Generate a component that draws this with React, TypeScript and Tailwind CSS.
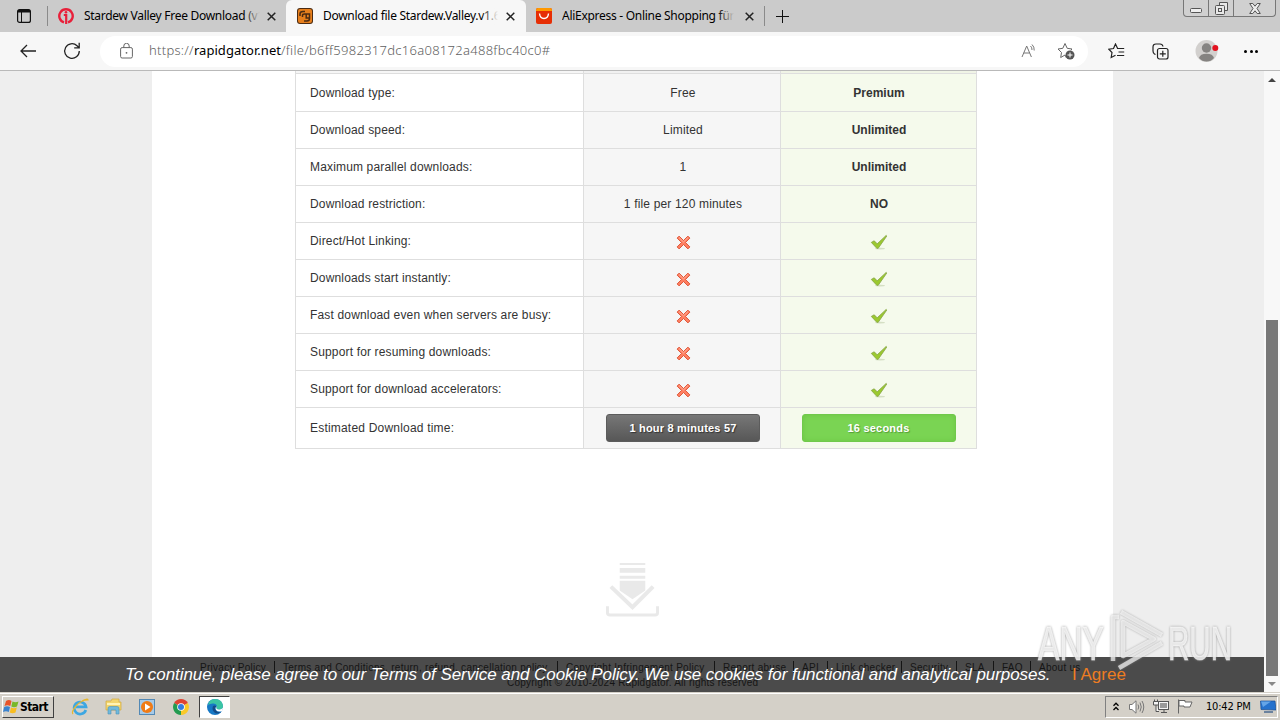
import { ReactNode } from "react";

const rows = [
  { label: "Download type:", free: "Free", premium: "Premium" },
  { label: "Download speed:", free: "Limited", premium: "Unlimited" },
  { label: "Maximum parallel downloads:", free: "1", premium: "Unlimited" },
  { label: "Download restriction:", free: "1 file per 120 minutes", premium: "NO" },
  { label: "Direct/Hot Linking:" },
  { label: "Downloads start instantly:" },
  { label: "Fast download even when servers are busy:" },
  { label: "Support for resuming downloads:" },
  { label: "Support for download accelerators:" },
];

const footerLinks = [
  { text: "Privacy Policy", width: "w-[83px]" },
  { text: "Terms and Conditions, return, refund, cancellation policy", width: "w-[283px]" },
  { text: "Copyright Infringement Policy", width: "w-[157px]" },
  { text: "Report abuse", width: "w-[79px]" },
  { text: "API", width: "w-[34px]" },
  { text: "Link checker", width: "w-[74px]" },
  { text: "Security", width: "w-[55px]" },
  { text: "SLA", width: "w-[37px]" },
  { text: "FAQ", width: "w-[37px]" },
  { text: "About us", width: "w-[45px]" },
];

function CloseIcon() {
  return (
    <svg width="9" height="9" viewBox="0 0 9 9" className="shrink-0" stroke="#222" strokeWidth="1.5">
      <path d="M0.7 0.7L8.3 8.3M8.3 0.7L0.7 8.3" />
    </svg>
  );
}

function CrossIcon() {
  return (
    <svg width="15" height="15" viewBox="0 0 16 16" className="mt-[3px]">
      <path d="M3.3 1.2L8 5.9L12.7 1.2L14.8 3.3L10.1 8L14.8 12.7L12.7 14.8L8 10.1L3.3 14.8L1.2 12.7L5.9 8L1.2 3.3Z" fill="#ff8062" stroke="#dc5032" strokeWidth="1" strokeLinejoin="round" />
      <path d="M3.3 2.8L8 7.4L12.7 2.8" fill="none" stroke="#ffb39f" strokeWidth="1" />
    </svg>
  );
}

function CheckIcon() {
  return (
    <svg width="18" height="17" viewBox="0 0 18 17" className="mt-[3px]">
      <ellipse cx="10" cy="14.6" rx="5" ry="0.9" fill="#d5dfc4" />
      <path d="M1.3 8.4L4.2 6.8L7.2 9.8L16.2 1.4L16.8 2L8.2 14.3L6.8 14.3Z" fill="#9bc92f" stroke="#84a344" strokeWidth="0.8" strokeLinejoin="round" />
    </svg>
  );
}

function TabTitle({ children, fade }: { children: ReactNode; fade: string }) {
  return (
    <div className="relative h-5 overflow-hidden whitespace-nowrap font-['Noto_Sans',sans-serif] text-[12px] leading-5 text-black">
      {children}
      <div className={`absolute right-0 top-0 h-5 w-4 bg-linear-to-r from-transparent ${fade}`} />
    </div>
  );
}

function TabBar() {
  return (
    <div className="flex h-8 items-stretch bg-[#cbcbcb]">
      <div className="flex w-[47px] items-center pl-[17px]">
        <svg width="14" height="14" viewBox="0 0 14 14" fill="none" stroke="#111">
          <rect x="0.6" y="0.6" width="12.8" height="12.8" rx="2" strokeWidth="1.2" />
          <path d="M1 2.2H13" strokeWidth="2.6" />
          <path d="M4.5 3V13" />
        </svg>
      </div>
      <div className="my-1.5 w-px bg-[#8a8a8a]" />
      <div className="flex w-[238px] items-center pl-[10px]">
        <svg width="16" height="16" viewBox="0 0 16 16" className="mr-[10px] shrink-0" fill="none" stroke="#e8203a">
          <path d="M6 14.4A6.7 6.7 0 1 1 10 14.4" strokeWidth="2.4" />
          <path d="M5.8 7H8.2V16" strokeWidth="2.2" />
          <circle cx="8" cy="4.2" r="1.3" fill="#e8203a" stroke="none" />
        </svg>
        <div className="w-[176px] tracking-[-0.28px]">
          <TabTitle fade="to-[#cbcbcb]">Stardew Valley Free Download (v1.</TabTitle>
        </div>
        <div className="ml-[7px]"><CloseIcon /></div>
      </div>
      <div className="flex w-[240px] items-center rounded-t-md bg-[#f7f7f7] pl-[11px]">
        <svg width="16" height="16" viewBox="0 0 16 16" className="mr-[10px] shrink-0">
          <rect width="16" height="16" rx="3" fill="#4b2b12" />
          <rect x="1" y="1" width="14" height="14" rx="2" fill="#e77f1c" />
          <path d="M3 8V6Q3 3.5 6 3.5H8M5.5 9V7.5Q5.5 6 7.5 6H12.5V10.5Q12.5 13 10 13H7M12.5 6H9.2V10H12" fill="none" stroke="#4b2b12" strokeWidth="1.5" />
        </svg>
        <div className="w-[175px] tracking-[-0.28px]">
          <TabTitle fade="to-[#f7f7f7]">Download file Stardew.Valley.v1.6.</TabTitle>
        </div>
        <div className="ml-[8px]"><CloseIcon /></div>
      </div>
      <div className="flex w-[238px] items-center pl-[10px]">
        <svg width="16" height="16" viewBox="0 0 16 16" className="mr-[10px] shrink-0">
          <rect width="16" height="16" rx="2" fill="#e62e04" />
          <path d="M0 3V2Q0 0 2 0H14Q16 0 16 2V3Z" fill="#ff9800" />
          <path d="M3.5 5.5Q4 10.5 8 10.5T12.5 5.5" fill="none" stroke="#fff" strokeWidth="1.4" />
        </svg>
        <div className="w-[172px] tracking-[-0.28px]">
          <TabTitle fade="to-[#cbcbcb]">AliExpress - Online Shopping für</TabTitle>
        </div>
        <div className="ml-[11px]"><CloseIcon /></div>
      </div>
      <div className="my-1.5 w-px bg-[#8a8a8a]" />
      <div className="flex items-center pl-[11px]">
        <svg width="13" height="13" viewBox="0 0 13 13" stroke="#111">
          <path d="M6.5 0V13M0 6.5H13" />
        </svg>
      </div>
      <div className="ml-auto mr-1 flex h-[17px] w-[93px] rounded-b border border-t-0 border-[#777] bg-[#d0d0d0]">
        <div className="flex w-[25px] items-center justify-center border-r border-[#777]">
          <svg width="12" height="5" viewBox="0 0 12 5" className="mt-1"><rect x="0.5" y="0.5" width="11" height="4" rx="1" fill="#eee" stroke="#555" /></svg>
        </div>
        <div className="flex w-[25px] items-center justify-center border-r border-[#777]">
          <svg width="13" height="13" viewBox="0 0 13 13" fill="#e8e8e8" stroke="#555">
            <path d="M4.5 3.5V0.5H12.5V8.5H9.5" />
            <rect x="0.5" y="3.5" width="9" height="9" rx="1" />
            <rect x="3.5" y="6.5" width="3" height="3" />
          </svg>
        </div>
        <div className="flex flex-1 items-center justify-center">
          <svg width="12" height="11" viewBox="0 0 12 11" fill="#eee" stroke="#555">
            <path d="M0.7 0.5H3.8L6 3.2L8.2 0.5H11.3L8 5.5L11.3 10.5H8.2L6 7.8L3.8 10.5H0.7L4 5.5Z" />
          </svg>
        </div>
      </div>
    </div>
  );
}

function Toolbar() {
  return (
    <div className="flex h-[39px] items-center border-b border-[#b9b9b9] bg-[#f7f7f7] pl-5">
      <svg width="17" height="14" viewBox="0 0 17 14" fill="none" stroke="#222" strokeWidth="1.3">
        <path d="M16 7H1M7 1L1 7L7 13" />
      </svg>
      <svg width="18" height="18" viewBox="0 0 18 18" className="ml-[26px]" fill="none" stroke="#222" strokeWidth="1.3">
        <path d="M16.3 9A7.3 7.3 0 1 1 14 3.7L16 5.6M16.2 0.8V5.8H11.2" />
      </svg>
      <div className="ml-[19px] flex h-[31px] w-[988px] items-center rounded-full bg-white pl-5">
        <svg width="13" height="16" viewBox="0 0 13 16" fill="none" stroke="#666">
          <rect x="0.6" y="4.6" width="11.8" height="10.4" rx="1.5" />
          <path d="M3.8 4.6V3A2.7 2.7 0 0 1 9.2 3V4.6" />
          <circle cx="6.5" cy="9.8" r="0.9" fill="#666" stroke="none" />
        </svg>
        <div className="ml-4 whitespace-nowrap font-['Noto_Sans',sans-serif] text-[13px] font-light tracking-[0.28px] text-[#606060]">
          https://<span className="font-normal tracking-[0.05px] text-black">rapidgator.net</span>/file/b6ff5982317dc16a08172a488fbc40c0#
        </div>
        <svg width="17" height="16" viewBox="0 0 17 16" className="ml-auto" fill="none" stroke="#777">
          <path d="M1 14L5.7 3L10.4 14M2.7 10H8.7M9.5 3Q11.2 4.5 11 7M11 1.5Q13.5 3.8 13.2 7.5" />
        </svg>
        <svg width="18" height="18" viewBox="0 0 18 18" className="ml-[19px] mr-[13px]" fill="none" stroke="#666">
          <path d="M9.5 16L8 13L3.7 15.5L4.5 10.5L1 7L5.8 6.3L8 1.5L10.2 6.3L15 7L13.8 8.2" />
          <circle cx="13" cy="13" r="4.5" fill="#555" stroke="none" />
          <path d="M13 10.5V15.5M10.5 13H15.5" stroke="#fff" />
        </svg>
      </div>
      <svg width="17" height="16" viewBox="0 0 17 16" className="ml-5" fill="none" stroke="#222" strokeWidth="1.2">
        <path d="M9.5 5.2L7.5 1L5.5 5.5L0.8 6.2L4 9.5L3.2 14.5L7.5 12.2M9 5.5H16.2M10.5 9H16.2M9 12.5H16.2" />
      </svg>
      <svg width="17" height="17" viewBox="0 0 17 17" className="ml-[27px]" fill="none" stroke="#222" strokeWidth="1.2">
        <path d="M3.5 11.5L2.5 11Q1 10 1 8V4Q1 1 4 1H8Q10.5 1 11 3.5" />
        <rect x="5.5" y="5.5" width="10.5" height="10.5" rx="2" />
        <path d="M10.8 7.8V13.8M7.8 10.8H13.8" />
      </svg>
      <svg width="24" height="24" viewBox="0 0 24 24" className="ml-[26px]">
        <circle cx="11.5" cy="12" r="11" fill="#d2d0ce" />
        <circle cx="11.5" cy="9" r="4.7" fill="#858381" />
        <path d="M4 19Q5 14.7 11.5 14.7T19 19Q16 22.5 11.5 22.5T4 19Z" fill="#858381" />
        <circle cx="20.3" cy="9" r="3" fill="#e3121f" />
      </svg>
      <div className="ml-[25px] flex gap-[2.5px]">
        <div className="size-[3px] rounded-full bg-black" />
        <div className="size-[3px] rounded-full bg-black" />
        <div className="size-[3px] rounded-full bg-black" />
      </div>
    </div>
  );
}

function CompareTable() {
  return (
    <div className="ml-[143px] w-[682px] border-x border-[#dedede] text-[12px] text-[#333]">
      <div className="grid h-[3px] grid-cols-[287px_198px_195px] border-b border-[#dedede]">
        <div className="bg-[#f6f6f6]" />
        <div className="border-x border-[#dedede] bg-[#f1f1f1]" />
        <div className="bg-[#f0f4e6]" />
      </div>
      {rows.map((row) => (
        <div key={row.label} className="grid h-[37px] grid-cols-[287px_198px_195px] border-b border-[#dedede] nth-2:h-[38px]">
          <div className="flex items-center pl-[14px] tracking-[0.16px]">{row.label}</div>
          <div className="flex items-center justify-center border-x border-[#dedede] bg-[#f6f6f6] pl-0.5 tracking-[0.16px]">
            {row.free ?? <CrossIcon />}
          </div>
          <div className="flex items-center justify-center bg-[#f5faec] pl-px font-bold">
            {row.premium ?? <CheckIcon />}
          </div>
        </div>
      ))}
      <div className="grid h-[41px] grid-cols-[287px_198px_195px] border-b border-[#dedede]">
        <div className="flex items-center pl-[14px] tracking-[0.2px]">Estimated Download time:</div>
        <div className="flex items-center justify-center border-x border-[#dedede] bg-[#f6f6f6] pl-0.5">
          <div className="h-7 w-[154px] rounded-[3px] border border-[#5c5c5c] bg-linear-to-b from-[#777] to-[#575757] text-center text-[11px] font-bold leading-[26px] tracking-[0.2px] text-white text-shadow-[1px_1px_1px_#333]">
            1 hour 8 minutes 57
          </div>
        </div>
        <div className="flex items-center justify-center bg-[#f5faec]">
          <div className="h-7 w-[154px] rounded-[3px] border border-[#70c94b] bg-[#7ad453] text-center text-[11px] font-bold leading-[26px] tracking-[0.2px] text-white shadow-[inset_0_0_5px_#6cc546] text-shadow-[1px_1px_1px_#559c39]">
            16 seconds
          </div>
        </div>
      </div>
    </div>
  );
}

function Watermark() {
  return (
    <svg width="204" height="68" viewBox="0 0 204 68" className="absolute left-[1034px] top-[535px] drop-shadow-[0_0_1px_#888]">
      <g fill="#fff" fillOpacity="0.75" stroke="#fff" strokeOpacity="0.5" strokeWidth="1" fontFamily="Liberation Sans Narrow, Liberation Sans, sans-serif" fontSize="49">
        <text x="4" y="54" textLength="66" lengthAdjust="spacingAndGlyphs">ANY</text>
        <text x="134" y="54" textLength="64" lengthAdjust="spacingAndGlyphs">RUN</text>
      </g>
      <g fill="none" stroke="#fff" strokeOpacity="0.65" strokeWidth="4.5" strokeLinejoin="round">
        <path d="M89 16V50L120 33Z" />
        <path d="M85 11H79V55" />
        <path d="M87 6L128 29M85 62L128 37" />
      </g>
    </svg>
  );
}

function Page() {
  return (
    <div className="relative flex h-[621px] overflow-hidden bg-[#eee]">
      <div className="ml-[152px] flex w-[961px] flex-col bg-white">
        <CompareTable />
        <svg width="53" height="55" viewBox="0 0 54 56" className="ml-[454px] mt-[113px]" fill="#e9e9e9">
          <path d="M14 1H40V3H14ZM14 6H40V11H14ZM14 14H40V17H14ZM14 19H40V29L27 38L14 29Z" />
          <path d="M5 25L27 46L48 25" fill="none" stroke="#e9e9e9" strokeWidth="4" />
          <path d="M1.5 45V52Q1.5 54 4 54H50Q52.5 54 52.5 52V45" fill="none" stroke="#e9e9e9" strokeWidth="3" />
        </svg>
      </div>
      <div className="ml-auto flex w-4 flex-col items-center bg-[#f8f8f8]">
        <svg width="8" height="4" viewBox="0 0 8 4" className="mt-[7px]"><path d="M0 4L4 0L8 4Z" fill="#444" /></svg>
        <div className="mt-[238px] h-[356px] w-3 bg-[#777]" />
        <svg width="8" height="4" viewBox="0 0 8 4" className="mt-[6px]"><path d="M0 0L4 4L8 0Z" fill="#888" /></svg>
      </div>
      {/* Cookie bar covers the page footer */}
      <div className="absolute bottom-0 left-0 h-[35px] w-[1264px] overflow-hidden bg-[#4b4b4b]">
        <div className="flex h-5 items-center whitespace-nowrap pl-[200px] text-[10px] text-[#151515]">
          {footerLinks.map((link, i) => (
            <div key={link.text} className={`flex h-3 shrink-0 items-center tracking-[0.27px] ${link.width} ${i > 0 ? "before:-ml-[9px] before:mr-2 before:h-3 before:w-px before:bg-[#151515]" : ""}`}>
              {link.text}
            </div>
          ))}
        </div>
        <div className="-mt-px pl-[507px] text-[10px] leading-[14px] tracking-[0.22px] text-[#151515]">Copyright © 2010-2024 Rapidgator. All rights reserved</div>
        <div className="absolute left-[125px] top-[6px] flex whitespace-nowrap text-[17px] leading-6 text-white">
          <span className="w-[947px] italic tracking-[-0.066px]">To continue, please agree to our Terms of Service and Cookie Policy. We use cookies for functional and analytical purposes.</span>
          <span className="text-[#ee7d22]">I Agree</span>
        </div>
      </div>
      <Watermark />
    </div>
  );
}

function Taskbar() {
  return (
    <div className="flex h-7 items-center border-t border-[#d4d0c8] bg-[#d4d0c8] pl-0.5 shadow-[inset_0_1px_0_#fff]">
      <div className="flex h-[22px] w-[52px] items-center border border-b-[#404040] border-l-white border-r-[#404040] border-t-white font-['DejaVu_Sans_Condensed','DejaVu_Sans',sans-serif] text-[12px] font-bold tracking-[-0.6px] text-black">
        <svg width="17" height="16" viewBox="0 0 17 16" className="shrink-0">
          <path d="M3 2Q6 0 8.5 2L7.3 7Q4.5 5.5 1.5 7Z" fill="#e8542a" />
          <path d="M9.5 2.5Q12.5 4 15.5 2.5L14 7.5Q11 9 8.3 7.5Z" fill="#79b829" />
          <path d="M1.2 8Q4 6.5 7 8L5.8 13Q3 11.5 0 13Z" fill="#3a83cf" />
          <path d="M8 8.5Q11 10 13.8 8.5L12.5 13.5Q9.5 15 6.8 13.5Z" fill="#f8bd20" />
        </svg>
        Start
      </div>
      <svg width="18" height="18" viewBox="0 0 18 18" className="ml-[17px]" fill="none">
        <path d="M14.8 12A6 6 0 1 1 15 8.8H5" stroke="#3da7e2" strokeWidth="2.7" />
        <path d="M2 16Q0 14 5 8T17 2Q16.5 0 11 3" stroke="#e7b72f" strokeWidth="1.2" />
      </svg>
      <svg width="17" height="17" viewBox="0 0 17 17" className="ml-4">
        <path d="M1 3H6L7 1H14V4H16V12H1Z" fill="#f2d56f" stroke="#d1a93e" strokeWidth="0.7" />
        <path d="M2 6H15" stroke="#fff3b5" strokeWidth="2" />
        <path d="M3 16V10Q3 8.5 5 8.5H12Q14 8.5 14 10V16H11V12H6V16Z" fill="#70b9dc" stroke="#4c92b8" strokeWidth="0.6" />
      </svg>
      <svg width="16" height="16" viewBox="0 0 16 16" className="ml-[17px]">
        <rect x="0.5" y="0.5" width="15" height="15" fill="#a6cae8" stroke="#5389b5" />
        <circle cx="8" cy="8" r="6" fill="#f07b15" />
        <path d="M6 4.5L11.5 8L6 11.5Z" fill="#fff" />
      </svg>
      <svg width="16" height="16" viewBox="0 0 16 16" className="ml-[18px]">
        <path d="M8 8L1.1 4A8 8 0 0 1 14.9 4Z" fill="#df4332" />
        <path d="M8 8L14.9 4A8 8 0 0 1 8 16Z" fill="#f9c928" />
        <path d="M8 8V16A8 8 0 0 1 1.1 4Z" fill="#239b50" />
        <circle cx="8" cy="8" r="3.8" fill="#fff" />
        <circle cx="8" cy="8" r="3" fill="#347de0" />
      </svg>
      <div className="ml-[10px] flex h-[22px] w-[31px] items-center justify-center border border-b-white border-l-[#404040] border-r-white border-t-[#404040] bg-white">
        <svg width="16" height="16" viewBox="0 0 16 16">
          <circle cx="8" cy="8" r="8" fill="#1678c5" />
          <path d="M1 6Q2 0 8 0Q15 0 16 7Q16 10.5 12 10.5Q9 10.5 9.5 9Q11 5 6.5 4.5Q3 4.3 1 6Z" fill="#3bc5a4" />
          <path d="M6 7Q4 12 9 14.5Q12 15 14.5 12.8Q11 14 9 11.5Q7.5 9.5 9.3 7.5Q8 6 6 7Z" fill="#134b87" />
          <path d="M9.5 7Q8.5 10.5 12 10.5Q14.5 10.8 16 8.5L15.5 12Q11 13.5 9 11Q7.7 9 9.5 7Z" fill="#fff" />
        </svg>
      </div>
      <div className="ml-auto mr-0.5 flex h-[22px] w-[173px] items-center border border-b-white border-l-[#808080] border-r-white border-t-[#808080] font-['DejaVu_Sans_Condensed','DejaVu_Sans',sans-serif] text-[11px] text-black">
        <svg width="6" height="9" viewBox="0 0 6 9" className="ml-[7px]" fill="none" stroke="#000" strokeWidth="1.3">
          <path d="M0.5 3.7L3 1.2L5.5 3.7M0.5 8L3 5.5L5.5 8" />
        </svg>
        <svg width="16" height="14" viewBox="0 0 16 14" className="ml-[10px]" fill="#fff" stroke="#777">
          <path d="M0.5 4.5H3L7 0.8V13.2L3 9.5H0.5Z" />
          <path d="M9 4.5Q10.5 7 9 9.5M11 2.5Q13.5 7 11 11.5M13 1Q16.5 7 13 13" fill="none" />
        </svg>
        <svg width="16" height="15" viewBox="0 0 16 15" className="ml-2" fill="#f4f4f4" stroke="#555">
          <rect x="5.5" y="2.5" width="10" height="8" />
          <rect x="7" y="4" width="7" height="5" fill="#999" stroke="none" />
          <path d="M8 13.5H14M11 10.5V13" />
          <path d="M0.5 2.5H5.5V6H0.5ZM1.5 0.5V2.5M4.5 0.5V2.5M3 6V12.5H6" />
        </svg>
        <svg width="16" height="15" viewBox="0 0 16 15" className="ml-2" fill="#fff" stroke="#666">
          <path d="M1.5 0.5V14.5M2 1.5H8V3H15L13 8H7V7H2Z" />
        </svg>
        <span className="ml-[13px] w-[47px] whitespace-nowrap pt-0.5 tracking-[-0.2px]">10:42 PM</span>
        <svg width="16" height="13" viewBox="0 0 16 13" className="ml-[7px]">
          <path d="M0.5 1H15L16 10L1 9.5Z" fill="#2672cd" stroke="#174c93" strokeWidth="0.7" />
          <path d="M1 1.5H11L3 7Z" fill="#65a5e8" />
          <path d="M4 12H13" stroke="#496991" strokeWidth="1.5" />
        </svg>
      </div>
    </div>
  );
}

export default function App() {
  return (
    <div className="h-[720px] w-[1280px] overflow-hidden bg-white font-['Liberation_Sans',Arial,sans-serif]">
      <TabBar />
      <Toolbar />
      <Page />
      <Taskbar />
    </div>
  );
}
